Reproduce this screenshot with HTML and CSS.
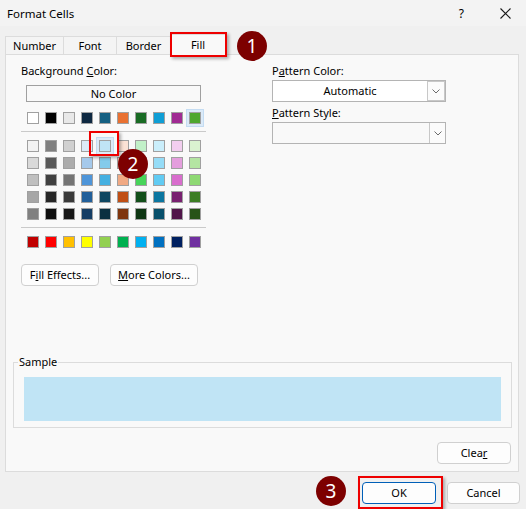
FILE: index.html
```html
<html>

<head>
    <meta charset="UTF-8">
    <link rel="stylesheet" href="styles.css">
</head>

<body>
    <div class="dialog">
        <div class="titlebar">
            <span class="title">Format Cells</span>
            <span class="help">?</span>
            <svg class="close" width="11" height="11" viewBox="0 0 11 11"><path d="M0.5 0.5L10.5 10.5M10.5 0.5L0.5 10.5" stroke="#1a1a1a" stroke-width="1.1" fill="none"/></svg>
        </div>
        <div class="tabs">
            <div class="tab t-number">Number</div>
            <div class="tab t-font">Font</div>
            <div class="tab t-border">Border</div>
            <div class="tab t-fill active">Fill</div>
        </div>
        <div class="panel">
            <div class="top">
                <div class="bgcol">
                    <div class="label">Background <u>C</u>olor:</div>
                    <div class="nocolor">No Color</div>
                    <div class="row">
                        <i style="background:#ffffff"></i><i style="background:#000000"></i><i style="background:#e8e8e8"></i><i style="background:#0e2841"></i><i style="background:#156082"></i><i style="background:#e97132"></i><i style="background:#196b24"></i><i style="background:#0f9ed5"></i><i style="background:#a02b93"></i><i class="hot" style="background:#4ea72e"></i>
                    </div>
                    <div class="sep"></div>
                    <div class="grid">
                        <i style="background:#f2f2f2"></i><i style="background:#7f7f7f"></i><i style="background:#d0d0d0"></i><i style="background:#dceaf7"></i><i class="hot" style="background:#c0e4f5"></i><i style="background:#fbe2d5"></i><i style="background:#c1f0c8"></i><i style="background:#caeefb"></i><i style="background:#f2ceef"></i><i style="background:#daf2d0"></i>
                        <i style="background:#d9d9d9"></i><i style="background:#595959"></i><i style="background:#acacac"></i><i style="background:#a5c9eb"></i><i style="background:#83cbeb"></i><i style="background:#f7c7ac"></i><i style="background:#83e28e"></i><i style="background:#95dcf7"></i><i style="background:#e49edd"></i><i style="background:#b4e5a2"></i>
                        <i style="background:#bfbfbf"></i><i style="background:#404040"></i><i style="background:#747474"></i><i style="background:#4e95d9"></i><i style="background:#45b0e1"></i><i style="background:#f1a983"></i><i style="background:#47d45a"></i><i style="background:#61cbf3"></i><i style="background:#d86dcd"></i><i style="background:#8ed973"></i>
                        <i style="background:#a6a6a6"></i><i style="background:#262626"></i><i style="background:#3a3a3a"></i><i style="background:#215f9a"></i><i style="background:#0f4761"></i><i style="background:#c04f15"></i><i style="background:#124f1a"></i><i style="background:#0b76a0"></i><i style="background:#782070"></i><i style="background:#3b7d23"></i>
                        <i style="background:#808080"></i><i style="background:#0d0d0d"></i><i style="background:#171717"></i><i style="background:#153d64"></i><i style="background:#0a2f40"></i><i style="background:#7f350e"></i><i style="background:#0d3512"></i><i style="background:#074f6a"></i><i style="background:#501549"></i><i style="background:#275317"></i>
                    </div>
                    <div class="sep"></div>
                    <div class="row std">
                        <i style="background:#c00000"></i><i style="background:#ff0000"></i><i style="background:#ffc000"></i><i style="background:#ffff00"></i><i style="background:#92d050"></i><i style="background:#00b050"></i><i style="background:#00b0f0"></i><i style="background:#0070c0"></i><i style="background:#002060"></i><i style="background:#7030a0"></i>
                    </div>
                    <div class="btns">
                        <div class="btn b-effects">F<u>i</u>ll Effects...</div>
                        <div class="btn b-more"><u>M</u>ore Colors...</div>
                    </div>
                </div>
                <div class="pattern">
                    <div class="label">P<u>a</u>ttern Color:</div>
                    <div class="combo">
                        <span class="value">Automatic</span>
                        <span class="arrow"><svg width="8" height="5" viewBox="0 0 8 5"><path d="M0.5 0.5L4 4L7.5 0.5" stroke="#6b6b6b" fill="none"/></svg></span>
                    </div>
                    <div class="label l-style"><u>P</u>attern Style:</div>
                    <div class="combo empty">
                        <span class="value"></span>
                        <span class="arrow"><svg width="8" height="5" viewBox="0 0 8 5"><path d="M0.5 0.5L4 4L7.5 0.5" stroke="#6b6b6b" fill="none"/></svg></span>
                    </div>
                </div>
            </div>
            <fieldset class="sample">
                <legend>Sample</legend>
                <div class="fill"></div>
            </fieldset>
            <div class="clearrow">
                <div class="btn b-clear">Clea<u>r</u></div>
            </div>
        </div>
        <div class="footer">
            <div class="btn b-ok">OK</div>
            <div class="btn b-cancel">Cancel</div>
        </div>

        <div class="mark m-fill"></div>
        <div class="mark m-swatch"></div>
        <div class="mark m-ok"></div>
        <div class="step s1">1</div>
        <div class="step s2">2</div>
        <div class="step s3">3</div>
    </div>
</body>

</html>
```

FILE: styles.css
```css
* {
    box-sizing: border-box;
}
body {
    margin: 0;
    overflow: hidden;
}
.dialog {
    position: relative;
    width: 526px;
    height: 509px;
    background: #f0f0f0;
    font-family: "Segoe UI", "Noto Sans", sans-serif;
    font-size: 11px;
    color: #000;
}
.titlebar {
    display: flex;
    align-items: center;
    height: 26px;
    padding-left: 7px;
    background: #f3f3f3;
}
.title {
    flex: 1;
    font-size: 11.5px;
}
.help {
    margin-right: 36px;
    font-size: 12px;
}
.close {
    margin-right: 15px;
}

/* tabs */
.tabs {
    display: flex;
    align-items: flex-end;
    height: 18px;
    margin: 10px 0 0 5px;
}
.tab {
    height: 18px;
    line-height: 17px;
    text-align: center;
    border: 1px solid #dcdcdc;
    border-bottom: none;
    border-right: none;
    background: #f4f4f4;
}
.t-number { width: 58px; }
.t-font { width: 53px; }
.t-border { width: 54px; }
.tab.active {
    width: 56px;
    height: 21px;
    line-height: 19px;
    background: #f9f9f9;
    border-right: 1px solid #dcdcdc;
    position: relative;
    z-index: 1;
    margin-bottom: -1px;
}

/* panel */
.panel {
    margin: 0 7px 0 5px;
    background: #f9f9f9;
    border: 1px solid #dcdcdc;
    padding-bottom: 7px;
}
.top {
    display: flex;
    gap: 66px;
    padding: 9px 0 0 15px;
}
.bgcol {
    width: 185px;
}
.label {
    height: 14px;
    line-height: 14px;
}
.nocolor {
    width: 175px;
    height: 17px;
    margin: 7px 0 0 5px;
    border: 1px solid #a0a0a0;
    line-height: 15px;
    text-align: center;
}
.row, .grid {
    display: grid;
    grid-template-columns: repeat(10, 12px);
    column-gap: 6px;
    row-gap: 5px;
    margin-left: 6px;
}
.row {
    margin-top: 10px;
}
.grid, .std {
    margin-top: 8px;
}
.row i, .grid i {
    display: block;
    width: 12px;
    height: 12px;
    border: 1px solid #a0a0a0;
}
i.hot {
    box-shadow: 0 0 0 2px #dbeaf8, 0 0 0 3px #c4dcf2;
}
.sep {
    height: 1px;
    margin-top: 7px;
    background: #cacaca;
}
.btns {
    display: flex;
    gap: 11px;
    margin-top: 16px;
}
.btn {
    height: 22px;
    line-height: 20px;
    text-align: center;
    border: 1px solid #d0d0d0;
    border-radius: 4px;
    background: #fdfdfd;
}
.b-effects { width: 78px; }
.b-more { width: 88px; }

.pattern {
    width: 174px;
}
.l-style {
    margin-top: 4px;
}
.combo {
    display: flex;
    height: 22px;
    margin-top: 2px;
    border: 1px solid #b4b4b4;
    background: #fff;
}
.combo .value {
    flex: 1;
    line-height: 20px;
    text-align: center;
}
.combo .arrow {
    display: flex;
    align-items: center;
    justify-content: center;
    width: 18px;
    border: 1px solid #c8c8c8;
    background: #fbfbfb;
}
.combo.empty {
    background: #f9f9f9;
}
.combo.empty .arrow {
    width: 16px;
    border-top: none;
    border-bottom: none;
    border-right: none;
}

/* sample */
.sample {
    margin: 69px 6px 0 7px;
    padding: 0 4px 6px 4px;
    border: 1px solid #dcdcdc;
}
.sample legend {
    padding: 0 1px;
    line-height: 14px;
}
.fill {
    height: 44px;
    margin: 8px 6px 0 6px;
    background: #c0e4f5;
}
.clearrow {
    display: flex;
    justify-content: flex-end;
    margin: 14px 7px 0 0;
}
.b-clear { width: 74px; }

/* footer */
.footer {
    display: flex;
    justify-content: flex-end;
    gap: 11px;
    margin: 10px 6px 0 0;
}
.b-ok {
    width: 74px;
    border-color: #005fb8;
}
.b-cancel { width: 73px; }

/* callouts */
.mark {
    position: absolute;
    border: 2px solid #ee0000;
    box-shadow: 2px 2px 3px rgba(0, 0, 0, .3);
    z-index: 2;
}
.m-fill { left: 170px; top: 32px; width: 57px; height: 25px; }
.m-swatch { left: 89px; top: 131px; width: 30px; height: 25px; }
.m-ok { left: 358px; top: 476px; width: 85px; height: 33px; }
.step {
    position: absolute;
    width: 30px;
    height: 30px;
    border-radius: 50%;
    background: #7d0000;
    color: #fff;
    font-size: 19px;
    line-height: 30px;
    text-align: center;
    z-index: 3;
}
.s1 { left: 237px; top: 31px; }
.s2 { left: 118px; top: 149px; }
.s3 { left: 316px; top: 476px; }
```
